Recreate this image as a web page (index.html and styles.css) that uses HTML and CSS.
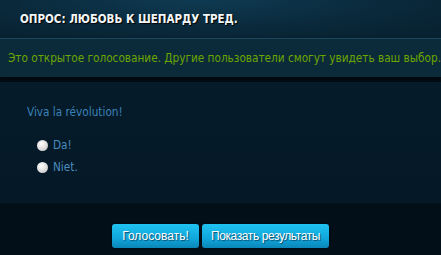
FILE: index.html
```html
<!DOCTYPE html>
<html lang="ru">
<head>
    <meta charset="UTF-8">
    <meta name="viewport" content="width=device-width, initial-scale=1.0">
    <title>Опрос</title>
    <link rel="stylesheet" href="styles.css">
</head>
<body>
    <div class="poll">
        <div class="poll-header">
            <h2>ОПРОС: ЛЮБОВЬ К ШЕПАРДУ ТРЕД.</h2>
        </div>
        <div class="poll-notice">Это открытое голосование. Другие пользователи смогут увидеть ваш выбор.</div>
        <div class="poll-body">
            <p class="question">Viva la révolution!</p>
            <label class="option"><span class="radio"></span>Da!</label>
            <label class="option"><span class="radio"></span>Niet.</label>
        </div>
        <div class="poll-footer">
            <button class="btn btn-vote">Голосовать!</button>
            <button class="btn btn-results">Показать результаты</button>
        </div>
    </div>
</body>
</html>
```

FILE: styles.css
```css
body {
    margin: 0;
    background-color: #020f19;
    font-family: "DejaVu Sans Condensed", sans-serif;
}

.poll {
    width: 441px;
    height: 255px;
    display: flex;
    flex-direction: column;
    background-color: #020f19;
}

.poll-header {
    height: 38px;
    display: flex;
    align-items: center;
    padding-left: 20px;
    background: radial-gradient(ellipse 70% 120% at 45% 0%, #0f3a52 0%, #0a2a3c 60%, #082231 100%);
}

.poll-header h2 {
    margin: 0;
    color: #f2f6f8;
    font-family: "DejaVu Sans Condensed", sans-serif;
    font-weight: bold;
    font-size: 11.5px;
    text-shadow: 1px 1px 1px #000;
}

.poll-notice {
    height: 38px;
    display: flex;
    align-items: center;
    padding-left: 8px;
    border-top: 1px solid #1b465c;
    background-color: #0b2b3b;
    color: #6ba600;
    font-size: 11.7px;
    white-space: nowrap;
    box-shadow: 0 3px 4px rgba(0, 0, 0, 0.55);
}

.poll-body {
    height: 122px;
    padding: 23px 0 0 27px;
    box-sizing: border-box;
    margin-top: 5px;
    background: linear-gradient(#061c2b, #041826);
    border-bottom: 1px solid #03121d;
}

.question {
    margin: 0 0 15px 0;
    color: #3a82b8;
    font-size: 11.7px;
}

.option {
    display: flex;
    align-items: center;
    height: 22px;
    padding-left: 10px;
    color: #4a8bbd;
    font-size: 11.7px;
}

.radio {
    width: 11px;
    height: 11px;
    border-radius: 50%;
    margin-right: 5px;
    background: radial-gradient(circle at 40% 35%, #ffffff, #d8d8d8 60%, #b8b8b8);
}

.poll-footer {
    flex: 1;
    display: flex;
    justify-content: center;
    align-items: flex-start;
    gap: 3px;
    padding-top: 20px;
    background-color: #020f19;
}

.btn {
    height: 24px;
    padding: 0;
    border: none;
    border-radius: 3px;
    background: linear-gradient(#1fc3f1, #10a6dc 60%, #0b86b8);
    color: #fff;
    font-family: "Liberation Sans", sans-serif;
    font-size: 12px;
    text-shadow: 1px 1px 1px #0a4a6a;
    box-shadow: 0 0 2px rgba(0, 0, 0, 0.6);
}

.btn-vote {
    width: 87px;
}

.btn-results {
    width: 127px;
    letter-spacing: -0.4px;
}
```
